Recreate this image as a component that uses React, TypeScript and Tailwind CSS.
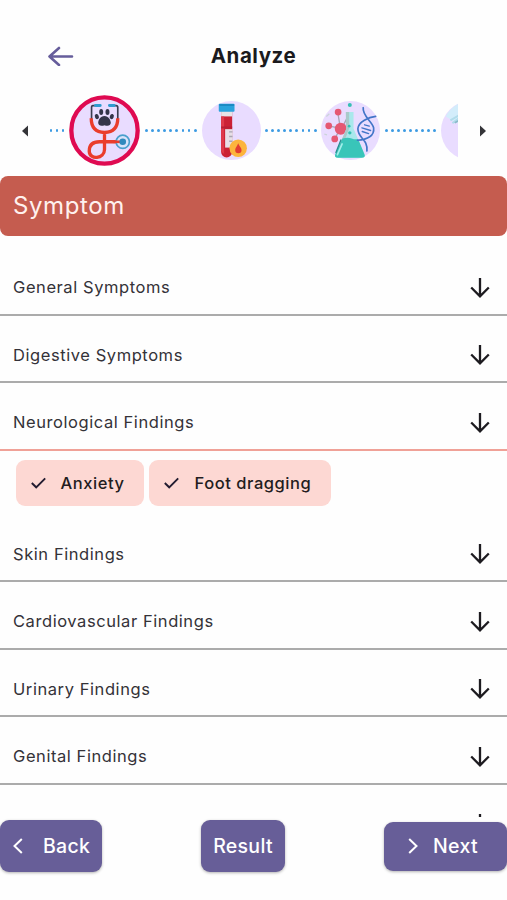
import type { ReactNode } from "react";

function StethoscopeIcon() {
  return (
    <svg viewBox="0 0 214 214" className="h-[71px] w-[71px] shrink-0" fill="none">
      <circle cx="107" cy="107" r="100" fill="#e9dcff" stroke="#df0a51" strokeWidth="13" />
      <path d="M80 32H72Q68 32 68 38V72M130 32H142Q147 32 147 38V72" stroke="#3b3c50" strokeWidth="5" />
      <path d="M80 32H94M122 32H136" stroke="#2f9bd0" strokeWidth="9" strokeLinecap="round" />
      <path
        d="M67 70C67 98 79 112 107 113C135 112 147 98 147 70M107 112V164C107 192 62 198 61 169C61 148 74 141 92 141H158"
        stroke="#ea3d2c"
        strokeWidth="10"
      />
      <circle cx="162" cy="141" r="20" fill="#d9e3fa" stroke="#4a9fcd" strokeWidth="5" />
      <path d="M134 141H158" stroke="#ea3d2c" strokeWidth="8" />
      <circle cx="162" cy="141" r="10" fill="#3189bd" />
      <g fill="#34354a">
        <ellipse cx="97" cy="51" rx="6" ry="9" />
        <ellipse cx="116" cy="51" rx="6" ry="9" />
        <ellipse cx="84" cy="65" rx="6" ry="8" transform="rotate(-20 84 65)" />
        <ellipse cx="129" cy="65" rx="6" ry="8" transform="rotate(20 129 65)" />
        <path d="M107 63C94 63 88 76 88 84C88 94 99 94 107 91C115 94 126 94 126 84C126 76 119 63 107 63Z" />
      </g>
    </svg>
  );
}

function BloodTubeIcon() {
  return (
    <svg viewBox="0 0 176 176" className="h-[59px] w-[59px] shrink-0" fill="none">
      <circle cx="88" cy="88" r="88" fill="#e9dcff" />
      <path d="M57 28H90V152A16 16 0 0 1 57 152Z" fill="#cb2135" />
      <path d="M57 28H90V46H57Z" fill="#e9e3e7" />
      <path d="M57 46H66V158Q57 154 57 146Z" fill="#df3a4a" />
      <path d="M57 76H90V82H57Z" fill="#b91f35" />
      <path d="M69 84H91V139H69Z" fill="#e7dfe6" />
      <path d="M81 92H91M81 106H91M81 120H91" stroke="#a9a5b4" strokeWidth="4" />
      <rect x="50" y="8" width="47" height="24" rx="3" fill="#2aa2dc" />
      <path d="M52 12H96" stroke="#167fb8" strokeWidth="4" />
      <circle cx="108" cy="141" r="26" fill="#fcb43d" />
      <path d="M108 126C106 134 99 139 99 146A9.500 9.500 0 0 0 118 146C118 139 110 134 108 126Z" fill="#e23c32" />
    </svg>
  );
}

function LabIcon() {
  return (
    <svg viewBox="0 0 176 176" className="h-[59px] w-[59px] shrink-0" fill="none">
      <circle cx="88" cy="88" r="88" fill="#e9dcff" />
      <path d="M50 34L58 82M24 74L58 82M41 112L58 82M62 82L79 48" stroke="#a9a5b6" strokeWidth="4" />
      <g fill="#e55873">
        <circle cx="51" cy="33" r="10" />
        <circle cx="23" cy="74" r="10" />
        <circle cx="41" cy="113" r="10" />
        <circle cx="59" cy="83" r="18" />
      </g>
      <path d="M16 46L25 38M10 99L18 101" stroke="#cbd4d9" strokeWidth="4" />
      <path d="M75 33H97V82L129 157Q135 169 120 169H51Q38 169 43 158L75 84Z" fill="#a9e8ec" />
      <path d="M74 33H84V82L53 164L44 160L75 84Z" fill="#a9c9ca" />
      <path d="M64 112Q83 106 98 114H111L129 157Q135 169 120 169H51Q38 169 43 158Z" fill="#39c5b9" />
      <path d="M63 128L49 160" stroke="#a2efea" strokeWidth="5" strokeLinecap="round" />
      <path d="M44 155L60 115" stroke="#258f91" strokeWidth="4" />
      <g fill="#35bfb4">
        <circle cx="86" cy="12" r="6" />
        <circle cx="84" cy="75" r="4" />
        <circle cx="86" cy="95" r="5" />
      </g>
      <path
        d="M126 20C122 44 154 62 157 80C160 104 139 115 109 117M163 46C143 48 111 62 110 83C110 112 140 112 137 149"
        stroke="#4275c8"
        strokeWidth="5"
        strokeLinecap="round"
      />
      <path d="M130 71L144 75M122 80L148 88M123 91L142 97" stroke="#4275c8" strokeWidth="4" strokeLinecap="round" />
    </svg>
  );
}

function NextStepIcon() {
  return (
    <svg viewBox="0 0 176 176" className="h-[59px] w-[59px] shrink-0" fill="none">
      <circle cx="88" cy="88" r="88" fill="#e9dcff" />
      <path d="M52 8L88 0V70L44 64L14 46Q27 20 52 8Z" fill="#d3edfb" />
      <path d="M28 58L56 41M34 66L56 50" stroke="#b1dceb" strokeWidth="6" />
      <path d="M41 65L54 58" stroke="#8bb9c9" strokeWidth="5" />
    </svg>
  );
}

function Dots({ count, className }: { count: number; className?: string }) {
  return (
    <div className={`flex shrink-0 items-center justify-center gap-[3.3px] ${className ?? ""}`}>
      {Array.from({ length: count }, (_, i) => (
        <span key={i} className="size-[2.8px] rounded-full bg-[#3d9be3]" />
      ))}
    </div>
  );
}

function DownArrow() {
  return (
    <svg viewBox="0 0 20 22" className="h-[22px] w-5" fill="none" stroke="#1d1b20" strokeWidth="2.3">
      <path d="M10 1V19.500M1.200 10.500L10 19.300L18.800 10.500" />
    </svg>
  );
}

function Row({ title, active }: { title: string; active?: boolean }) {
  return (
    <button
      className={`flex h-[67.5px] w-full shrink-0 items-center justify-between border-b-2 pt-3.5 pr-[17px] pl-[13px] text-left ${
        active ? "border-[#f0a197]" : "border-[#ababab]"
      }`}
    >
      <span className="text-[16.5px] tracking-[0.57px] text-[#343238]">{title}</span>
      <DownArrow />
    </button>
  );
}

function Chip({ children }: { children: ReactNode }) {
  return (
    <button className="flex h-[46px] items-center gap-[15px] rounded-[9px] bg-[#fdd8d3] pr-5 pl-[15px] text-[16.5px] font-medium tracking-[0.55px] text-[#231c20]">
      <svg viewBox="0 0 15 12" className="h-3 w-[15px]" fill="none" stroke="#231c30" strokeWidth="1.9">
        <path d="M0.800 6L5.200 10.300L14.200 1.300" />
      </svg>
      <span className="pt-0.5">{children}</span>
    </button>
  );
}

function Chevron({ flip }: { flip?: boolean }) {
  return (
    <svg
      viewBox="0 0 10 16"
      className={flip ? "h-4 w-2.5 rotate-180" : "h-4 w-2.5"}
      fill="none"
      stroke="#fff"
      strokeWidth="2"
    >
      <path d="M1.200 1L8.500 8L1.200 15" />
    </svg>
  );
}

const before = ["General Symptoms", "Digestive Symptoms"];
const after = ["Skin Findings", "Cardiovascular Findings", "Urinary Findings", "Genital Findings", ""];

export default function App() {
  return (
    <div className="flex h-[900px] w-[507px] flex-col overflow-hidden bg-[#fefefe] font-['Inter','Liberation_Sans',sans-serif]">
      <header className="grid h-[95px] shrink-0 grid-cols-[1fr_auto_1fr] items-center pt-[17px]">
        <button className="pl-12">
          <svg viewBox="0 0 26 20" className="h-5 w-[26px]" fill="none" stroke="#665d9b" strokeWidth="2.6" strokeLinecap="round" strokeLinejoin="round">
            <path d="M24 10.500H1.500M11 2L1.500 10.500L11 19" />
          </svg>
        </button>
        <h1 className="text-[20.5px] font-bold tracking-[0.55px] text-[#1b1a1d]">Analyze</h1>
      </header>

      <div className="flex h-[71px] shrink-0 items-center">
        <div className="flex w-[49px] shrink-0 justify-end pr-[21px]">
          <svg viewBox="0 0 6 12" className="h-3 w-1.5" fill="#343438">
            <path d="M6 0.500V11.500L0 6Z" />
          </svg>
        </div>
        <div className="flex h-full w-[409px] shrink-0 items-center overflow-hidden">
          <Dots count={3} className="w-[20px] pr-1" />
          <StethoscopeIcon />
          <Dots count={9} className="w-[61.5px]" />
          <BloodTubeIcon />
          <Dots count={9} className="w-[60.5px]" />
          <LabIcon />
          <Dots count={9} className="w-[61px]" />
          <NextStepIcon />
        </div>
        <div className="pl-[22px]">
          <svg viewBox="0 0 6 12" className="h-3 w-1.5" fill="#343438">
            <path d="M0 0.500V11.500L6 6Z" />
          </svg>
        </div>
      </div>

      <h2 className="mt-[10px] flex h-[60px] shrink-0 items-center rounded-[8px] bg-[#c55c4f] pl-[13px] text-[24px] tracking-[0.6px] text-[#fff1ee]">
        Symptom
      </h2>

      <main className="flex h-[581px] shrink-0 flex-col overflow-hidden pt-3">
        {before.map((title) => (
          <Row key={title} title={title} />
        ))}
        <Row title="Neurological Findings" active />
        <div className="flex h-16 shrink-0 items-start gap-[5px] pt-[9px] pl-[15.5px]">
          <Chip>Anxiety</Chip>
          <Chip>Foot dragging</Chip>
        </div>
        {after.map((title) => (
          <Row key={title} title={title} />
        ))}
      </main>

      <footer className="flex shrink-0 items-center justify-between pt-[3px] text-[19.5px] font-medium tracking-[0.3px] text-white">
        <button className="flex h-[52px] w-[102px] items-center gap-5 rounded-[9px] bg-[#675e98] pl-[13px] shadow-[0_1px_3px_rgba(0,0,0,0.3)]">
          <Chevron flip />
          <span className="pt-0.5">Back</span>
        </button>
        <button className="flex h-[52px] w-[84px] items-center justify-center rounded-[9px] bg-[#675e98] shadow-[0_1px_3px_rgba(0,0,0,0.3)]">
          <span className="pt-0.5">Result</span>
        </button>
        <button className="flex h-[49px] w-[123px] items-center gap-[15px] rounded-[9px] bg-[#675e98] pl-6 shadow-[0_1px_3px_rgba(0,0,0,0.3)]">
          <Chevron />
          <span className="pt-0.5">Next</span>
        </button>
      </footer>
    </div>
  );
}
